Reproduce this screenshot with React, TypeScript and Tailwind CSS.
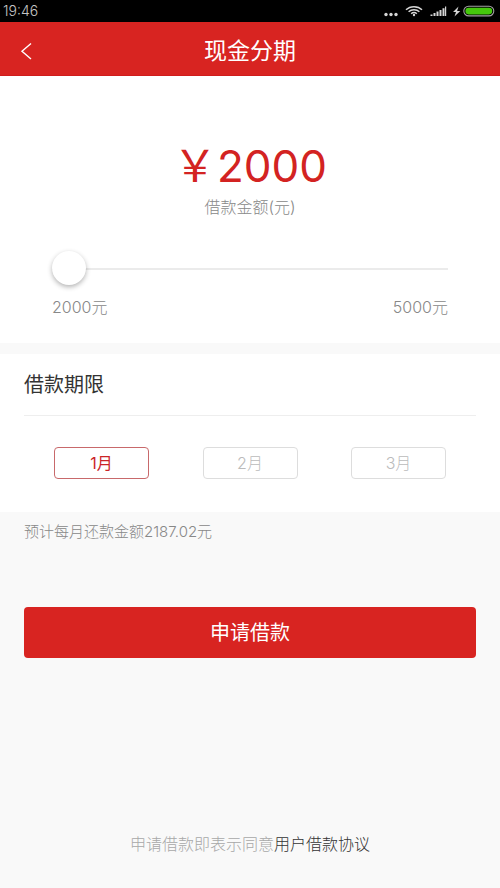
import { useState } from 'react';

const TERMS = [1, 2, 3];

function StatusBar() {
  return (
    <div className="flex h-[22px] items-center justify-between bg-black pl-[3px] pr-[5px] text-[#c4c4c4]">
      <span className="text-[14px] leading-[22px]">19:46</span>
      <svg width="112" height="22" viewBox="0 0 112 22" fill="none" aria-hidden="true">
        <g fill="#d6d6d6">
          <circle cx="3" cy="14.5" r="1.7" />
          <circle cx="8" cy="14.5" r="1.7" />
          <circle cx="13" cy="14.5" r="1.7" />
        </g>
        <g stroke="#d6d6d6" strokeWidth="1.5">
          <path d="M23 9.8C27.2 5.6 34.8 5.6 39 9.8" />
          <path d="M25.6 11.8C28.6 9 33.4 9 36.4 11.8" />
          <path d="M28.2 13.8C29.8 12.2 32.2 12.2 33.8 13.8" />
        </g>
        <circle cx="31" cy="15" r="1.2" fill="#d6d6d6" />
        <path
          d="M47.5 14.5h2V16h-2zM50.5 13h2v3h-2zM53.5 11.5h2V16h-2zM56.5 10h2v6h-2zM59.5 8.3h2V16h-2zM62 6.5h1.2V16H62z"
          fill="#d6d6d6"
        />
        <path d="M75.5 6.5L70 12h3l-1.5 4.5L77.3 11h-3.2z" fill="#d6d6d6" />
        <rect x="80.8" y="6.3" width="30" height="9.6" rx="4.8" stroke="#a3a3a3" strokeWidth="1.1" />
        <rect x="82.4" y="7.8" width="26.8" height="6.6" rx="3.3" fill="#45c80c" />
      </svg>
    </div>
  );
}

export default function App() {
  const [amount, setAmount] = useState(2000);
  const [term, setTerm] = useState(1);

  return (
    <div className="flex min-h-screen flex-col bg-[#f9f9f9] font-['Inter','Noto_Sans_CJK_SC',sans-serif] font-light">
      <StatusBar />
      <header className="grid h-[54px] grid-cols-[52px_1fr_52px] items-center border-b border-[#d01c1c] bg-[#d82421] text-white">
        <button type="button" aria-label="返回" className="flex h-full items-center justify-end pt-1 pr-5">
          <svg width="12" height="18" viewBox="0 0 12 18" fill="none" aria-hidden="true">
            <path d="M11 1.5L2 9.3L11 17" stroke="currentColor" strokeWidth="1.4" />
          </svg>
        </button>
        <h1 className="pt-1 text-center text-[23px] leading-8 font-normal">现金分期</h1>
      </header>

      <main className="flex flex-1 flex-col">
        <section className="bg-white px-[52px] pb-6 pt-16">
          <p className="text-center text-[44px] leading-[52px] font-normal text-[#d32322]">￥{amount}</p>
          <label htmlFor="amount" className="mt-[3px] block text-center text-base text-[#888888]">
            借款金额(元)
          </label>
          <input
            id="amount"
            type="range"
            min={2000}
            max={5000}
            step={100}
            value={amount}
            onChange={(e) => setAmount(Number(e.target.value))}
            className="mt-8 block h-9 w-full appearance-none bg-transparent [&::-webkit-slider-runnable-track]:h-[2px] [&::-webkit-slider-runnable-track]:bg-[#ebebeb] [&::-webkit-slider-thumb]:-mt-[17px] [&::-webkit-slider-thumb]:size-[34px] [&::-webkit-slider-thumb]:appearance-none [&::-webkit-slider-thumb]:rounded-full [&::-webkit-slider-thumb]:bg-white [&::-webkit-slider-thumb]:shadow-[0_2px_5px_rgba(0,0,0,0.3)]"
          />
          <div className="mt-2 flex justify-between text-base text-[#888888]">
            <span>2000元</span>
            <span>5000元</span>
          </div>
        </section>

        <section className="mt-[11px] bg-white px-6 pb-[33px]">
          <h2 className="border-b border-[#eeeeee] pb-4 pt-[17px] text-[20px] leading-7 font-normal text-[#333333]">
            借款期限
          </h2>
          <div className="mt-[31px] flex justify-between px-[30px]">
            {TERMS.map((m) => (
              <button
                key={m}
                type="button"
                aria-pressed={m === term}
                onClick={() => setTerm(m)}
                className={
                  'h-8 w-[95px] rounded border text-base ' +
                  (m === term ? 'border-[#c8696b] font-normal text-[#cb2427]' : 'border-[#dddddd] text-[#bbbbbb]')
                }
              >
                {m}月
              </button>
            ))}
          </div>
        </section>

        <div className="px-6 pt-2">
          <p className="text-[15px] leading-6 text-[#888888]">预计每月还款金额2187.02元</p>
          <button
            type="button"
            className="mt-[63px] h-[51px] w-full rounded bg-[#d82421] text-[20px] font-normal text-white"
          >
            申请借款
          </button>
        </div>

        <p className="mt-auto pb-8 text-center text-base text-[#a8a8a8]">
          申请借款即表示同意
          <a href="#agreement" className="text-[#333333]">
            用户借款协议
          </a>
        </p>
      </main>
    </div>
  );
}
